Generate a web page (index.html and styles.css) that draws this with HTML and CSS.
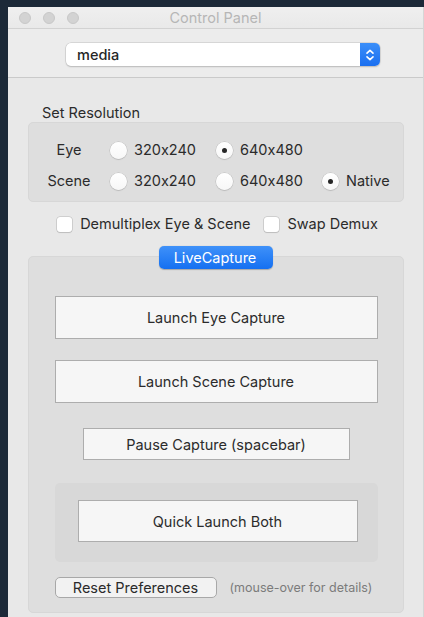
FILE: index.html
```html
<!DOCTYPE html>
<html lang="en">
<head>
<meta charset="utf-8">
<title>Control Panel</title>
<link rel="stylesheet" href="styles.css">
</head>
<body>
<div class="window">
  <div class="titlebar">
    <div class="lights">
      <span class="light"></span>
      <span class="light"></span>
      <span class="light"></span>
    </div>
    <div class="title">Control Panel</div>
  </div>

  <div class="toolbar">
    <div class="popup">
      <span class="popup-value">media</span>
      <span class="popup-stepper">
        <svg width="10" height="14" viewBox="0 0 10 14" aria-hidden="true">
          <path d="M2 5.2 L5 2.4 L8 5.2" fill="none" stroke="#fff" stroke-width="1.6" stroke-linecap="round" stroke-linejoin="round"/>
          <path d="M2 8.8 L5 11.6 L8 8.8" fill="none" stroke="#fff" stroke-width="1.6" stroke-linecap="round" stroke-linejoin="round"/>
        </svg>
      </span>
    </div>
  </div>

  <div class="content">
    <div class="section-label">Set Resolution</div>
    <div class="res-box">
      <div class="res-grid">
        <span class="res-label">Eye</span>
        <label class="opt"><span class="radio"></span>320x240</label>
        <label class="opt"><span class="radio on"></span>640x480</label>
        <span></span>

        <span class="res-label">Scene</span>
        <label class="opt"><span class="radio"></span>320x240</label>
        <label class="opt"><span class="radio"></span>640x480</label>
        <label class="opt"><span class="radio on"></span>Native</label>
      </div>
    </div>

    <div class="checks">
      <label class="opt check-opt"><span class="checkbox"></span>Demultiplex Eye &amp; Scene</label>
      <label class="opt check-opt"><span class="checkbox"></span>Swap Demux</label>
    </div>

    <div class="group">
      <div class="tab">LiveCapture</div>
      <div class="group-box">
        <button class="btn btn-wide">Launch Eye Capture</button>
        <button class="btn btn-wide btn-scene">Launch Scene Capture</button>
        <button class="btn btn-pause">Pause Capture (spacebar)</button>
        <div class="inner-box">
          <button class="btn btn-quick">Quick Launch Both</button>
        </div>
        <div class="reset-row">
          <button class="btn-round">Reset Preferences</button>
          <span class="hint">(mouse-over for details)</span>
        </div>
      </div>
    </div>
  </div>
</div>
</body>
</html>
```

FILE: styles.css
```css
* {
  box-sizing: border-box;
}

html, body {
  margin: 0;
  height: 100%;
}

body {
  background: #1c2938;
  padding: 7px 0 0 8px;
  font-family: "Inter", "Liberation Sans", sans-serif;
  font-size: 14.5px;
  font-feature-settings: "calt" 0;
  color: #2b2b2b;
  overflow: hidden;
}

button {
  font-feature-settings: "calt" 0;
}

.window {
  width: 416px;
  height: 610px;
  background: #e8e8e8;
  display: flex;
  flex-direction: column;
  border-right: 1px solid #d6d6d6;
}

/* title bar */
.titlebar {
  height: 22px;
  flex: none;
  background: linear-gradient(#efefef, #e9e9e9);
  border-bottom: 1px solid #d2d2d2;
  display: flex;
  align-items: center;
  position: relative;
}

.lights {
  display: flex;
  gap: 12px;
  padding-left: 11px;
}

.light {
  width: 12px;
  height: 12px;
  border-radius: 50%;
  background: #d3d3d3;
  border: 0.5px solid #c8c8c8;
}

.title {
  position: absolute;
  left: 0;
  right: 0;
  text-align: center;
  color: #b6b6b6;
  font-size: 14.5px;
  line-height: 22px;
}

/* toolbar with popup */
.toolbar {
  height: 49px;
  flex: none;
  background: #ececec;
  border-bottom: 1px solid #cacaca;
  padding: 14px 0 0 58px;
}

.popup {
  width: 314px;
  height: 23px;
  background: #fff;
  border-radius: 5px;
  box-shadow: 0 0 0 0.5px #c2c2c2, 0 1px 1.5px rgba(0, 0, 0, 0.22);
  display: flex;
  align-items: center;
  overflow: hidden;
}

.popup-value {
  flex: 1;
  padding-left: 11px;
  font-weight: 500;
  color: #262626;
}

.popup-stepper {
  width: 20px;
  height: 100%;
  background: linear-gradient(#3b8ff9, #1a6ff0);
  display: flex;
  align-items: center;
  justify-content: center;
}

/* content */
.content {
  flex: 1;
  padding: 26px 12px 0 20px;
  display: flex;
  flex-direction: column;
}

.section-label {
  padding-left: 14px;
  line-height: 17px;
}

.res-box {
  margin-top: 1px;
  width: 376px;
  height: 80px;
  background: #dedede;
  border: 1px solid #d7d7d7;
  border-radius: 5px;
  padding: 17px 0 0 11px;
}

.res-grid {
  display: grid;
  grid-template-columns: 70px 106px 106px auto;
  row-gap: 11px;
  align-items: center;
}

.res-label {
  width: 58px;
  text-align: center;
  line-height: 20px;
}

.opt {
  display: flex;
  align-items: center;
  gap: 7px;
  line-height: 20px;
  white-space: nowrap;
}

.radio {
  width: 17px;
  height: 17px;
  border-radius: 50%;
  background: linear-gradient(#ffffff, #f7f7f7);
  box-shadow: 0 0 0 0.5px #b9b9b9, 0 1px 1px rgba(0, 0, 0, 0.14);
  display: flex;
  align-items: center;
  justify-content: center;
  flex: none;
}

.radio.on::after {
  content: "";
  width: 5px;
  height: 5px;
  border-radius: 50%;
  background: #262626;
}

.checks {
  margin-top: 12px;
  display: flex;
  justify-content: center;
  gap: 14px;
  padding-right: 4px;
}

.check-opt {
  gap: 8px;
}

.checkbox {
  width: 15px;
  height: 15px;
  border-radius: 3px;
  background: #fff;
  box-shadow: 0 0 0 0.5px #b5b5b5, 0 1px 1px rgba(0, 0, 0, 0.14);
  flex: none;
}

/* LiveCapture group */
.group {
  margin-top: 12px;
  display: flex;
  flex-direction: column;
  align-items: center;
  width: 376px;
}

.tab {
  width: 114px;
  height: 23px;
  line-height: 23px;
  text-align: center;
  color: #fff;
  border-radius: 5px;
  background: linear-gradient(#3f91f9, #1570f1);
  box-shadow: 0 0.5px 1px rgba(0, 0, 0, 0.25);
  margin-bottom: -13px;
  position: relative;
  z-index: 1;
  padding-right: 2px;
}

.group-box {
  width: 376px;
  height: 357px;
  background: #dedede;
  border: 1px solid #d7d7d7;
  border-radius: 5px;
  padding: 39px 26px 0 26px;
  display: flex;
  flex-direction: column;
  align-items: center;
}

.btn {
  font: inherit;
  color: #2b2b2b;
  background: #f6f6f6;
  border: 1px solid #adadad;
  border-radius: 0;
  padding: 0;
  cursor: pointer;
}

.btn-wide {
  width: 323px;
  height: 43px;
}

.btn-scene {
  margin-top: 21px;
}

.btn-pause {
  margin-top: 25px;
  width: 267px;
  height: 32px;
}

.inner-box {
  margin-top: 23px;
  width: 323px;
  height: 79px;
  background: #d8d8d8;
  border-radius: 5px;
  padding-top: 17px;
  display: flex;
  justify-content: center;
}

.btn-quick {
  width: 280px;
  height: 42px;
  margin-left: 3px;
}

.reset-row {
  margin-top: 15px;
  width: 323px;
  display: flex;
  align-items: center;
  gap: 13px;
}

.btn-round {
  font: inherit;
  color: #2b2b2b;
  width: 162px;
  height: 21px;
  padding: 0;
  background: #f2f2f2;
  border: 1px solid #a8a8a8;
  border-radius: 5px;
  line-height: 19px;
}

.hint {
  font-size: 12.5px;
  color: #7b7b7b;
}
```
